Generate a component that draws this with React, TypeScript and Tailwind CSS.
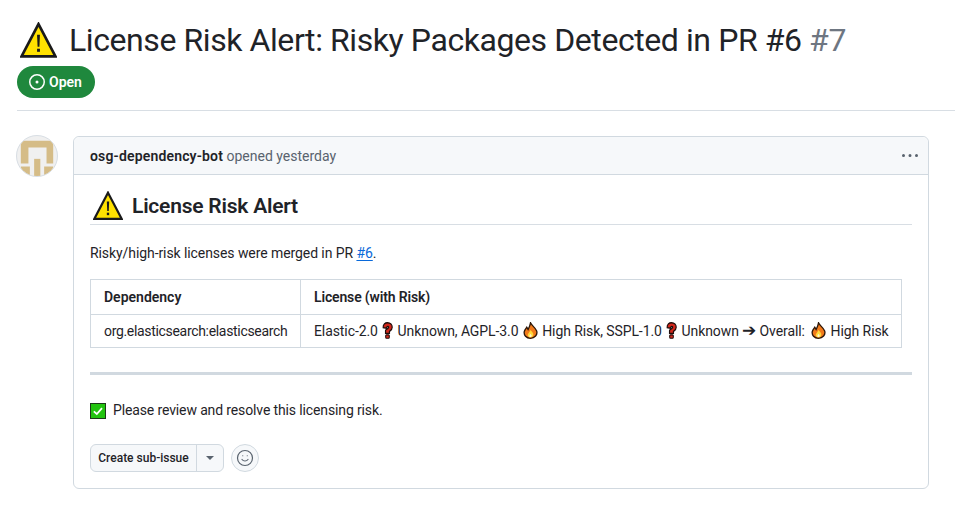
import { Smile } from 'lucide-react';

const font = { fontFamily: 'Roboto, sans-serif' };

const WarningIcon = ({ className }: { className: string }) => (
  <svg viewBox="0 0 36 36" className={className}>
    <path d="M18 2 L34.5 33.5 H1.5 Z" fill="#ffe100" stroke="#1a1a1a" strokeWidth="2.6" strokeLinejoin="miter" />
    <path d="M16.6 12.5 h2.8 l-0.5 11.5 h-1.8 Z" fill="#1a1a1a" />
    <rect x="16.6" y="26" width="2.8" height="3" fill="#1a1a1a" />
  </svg>
);

const QuestionIcon = () => (
  <svg viewBox="0 0 14 18" preserveAspectRatio="none" className="inline-block w-[11px] h-[17px] align-[-3px] mx-[1px]">
    <path
      d="M1.5 6 C1 2.5 4 0.8 7 0.8 C10.8 0.8 13 3 13 5.5 C13 8 11 9 9.5 10 L9.5 12 L4.5 12 L4.5 9 C4.5 8 8.5 7 8.5 5.5 C8.5 4.5 6 4.3 5.6 6.5 Z"
      fill="#d4281c"
      stroke="#1e0c0a"
      strokeWidth="1.5"
    />
    <rect x="4.7" y="13.6" width="4.6" height="3.6" rx="1" fill="#d4281c" stroke="#1e0c0a" strokeWidth="1.3" />
  </svg>
);

const FireIcon = () => (
  <svg viewBox="0 0 16 18" className="inline-block w-[15px] h-[17px] align-[-3px] mx-[1px]">
    <path
      d="M8 0.8 C9 3.5 13 5.5 14.6 9.5 C15.8 13.5 12.5 17.3 8 17.3 C3.5 17.3 0.5 14 1.4 10 C2 8 3.2 7 4 5.5 C4.8 6.5 5 7.5 5.4 8 C6.5 6 7.5 4 8 0.8 Z"
      fill="#f27a1a"
      stroke="#2c1608"
      strokeWidth="1.4"
    />
    <path d="M8 8.5 C9.5 10.5 11.5 12 11 14 C10.5 15.8 9 16.3 8 16.3 C6.5 16.3 5 15.3 5 14 C5 12.5 7 11 8 8.5 Z" fill="#ffd83a" />
    <path d="M8 12.5 C8.8 13.5 9.4 14 9.2 14.8 C9 15.6 8.5 15.8 8 15.8 C7.3 15.8 6.8 15.3 6.8 14.8 C6.8 14 7.6 13.5 8 12.5 Z" fill="#fff6d0" />
  </svg>
);

const CheckIcon = () => (
  <svg viewBox="0 0 16 16" className="w-4 h-4 shrink-0">
    <rect x="0.5" y="0.5" width="15" height="15" fill="#22c40f" stroke="#1c3a18" />
    <path d="M3.8 8.4 L6.8 11 L12 5.2" fill="none" stroke="#fff" strokeWidth="1.8" />
  </svg>
);

const Avatar = () => (
  <div className="w-[42px] h-[42px] shrink-0 rounded-full border border-[#d8dee4] overflow-hidden bg-[#f0f0f0]">
    <svg viewBox="0 0 42 42" className="w-full h-full">
      <path d="M4 5 H38 V29 H31 V12 H12 V29 H4 Z" fill="#d5bc87" />
      <rect x="18" y="24" width="6.5" height="18" fill="#d5bc87" />
      <path d="M4 32 H13.5 V42 H4 Z M28.5 32 H38 V42 H28.5 Z" fill="#d5bc87" />
    </svg>
  </div>
);

export default function App() {
  return (
    <div className="bg-white h-[507px] w-[955px] overflow-hidden text-[#1f2328] text-[14px] pl-[17px] pt-[18px]" style={font}>
      <div className="flex items-center gap-[12px] h-[44px]">
        <WarningIcon className="w-[37px] h-[37px] ml-[3px]" />
        <h1 className="text-[32px] font-normal leading-[44px] whitespace-nowrap tracking-[-0.42px]">
          License Risk Alert: Risky Packages Detected in PR #6 <span className="text-[#6e7681]">#7</span>
        </h1>
      </div>
      <div className="mt-[4px] inline-flex items-center gap-[4px] h-[32px] pl-[12px] pr-[13px] rounded-full bg-[#1f883d] text-white font-semibold">
        <svg viewBox="0 0 16 16" className="w-4 h-4" fill="currentColor">
          <path d="M8 9.5a1.5 1.5 0 1 0 0-3 1.5 1.5 0 0 0 0 3Z" />
          <path d="M8 0a8 8 0 1 1 0 16A8 8 0 0 1 8 0ZM1.5 8a6.5 6.5 0 1 0 13 0 6.5 6.5 0 0 0-13 0Z" />
        </svg>
        Open
      </div>
      <div className="mt-[12px] h-px bg-[#d8dee4]" />

      <div className="flex mt-[24px] items-start -ml-px">
        <Avatar />
        <div className="ml-[15px] w-[856px] h-[353px] rounded-md border border-[#d1d9e0] mt-px">
          <div className="flex items-center justify-between h-[38px] pl-[16px] pr-[10px] bg-[#f6f8fa] border-b border-[#d1d9e0] rounded-t-md">
            <div className="text-[#59636e] pt-[1px]">
              <span className="font-semibold text-[#1f2328] tracking-[0.17px]">osg-dependency-bot</span> opened yesterday
            </div>
            <svg viewBox="0 0 16 16" className="w-4 h-4 fill-[#59636e]">
              <path d="M8 9a1.5 1.5 0 1 0 0-3 1.5 1.5 0 0 0 0 3ZM1.5 9a1.5 1.5 0 1 0 0-3 1.5 1.5 0 0 0 0 3Zm13 0a1.5 1.5 0 1 0 0-3 1.5 1.5 0 0 0 0 3Z" />
            </svg>
          </div>
          <div className="px-[16px]">
            <div className="flex items-end gap-[9px] h-[50px] pb-[3px] border-b border-[#d8dee4]">
              <WarningIcon className="w-[30px] h-[30px] ml-[3px]" />
              <h2 className="text-[21px] font-semibold leading-[30px] tracking-[-0.22px]">License Risk Alert</h2>
            </div>
            <p className="mt-[18px] leading-[21px] tracking-[-0.08px]">
              Risky/high-risk licenses were merged in PR{' '}
              <a className="text-[#0969da] underline underline-offset-2">#6</a>.
            </p>
            <table className="mt-[15px] w-[812px] table-fixed border-collapse">
              <thead>
                <tr className="h-[35px]">
                  <th className="w-[210px] border border-[#d1d9e0] px-[13px] text-left font-semibold">Dependency</th>
                  <th className="border border-[#d1d9e0] px-[13px] text-left font-semibold tracking-[-0.15px]">License (with Risk)</th>
                </tr>
              </thead>
              <tbody>
                <tr className="h-[33px]">
                  <td className="border border-[#d1d9e0] px-[13px] tracking-[-0.32px]">org.elasticsearch:elasticsearch</td>
                  <td className="border border-[#d1d9e0] px-[13px] whitespace-nowrap tracking-[-0.09px]">
                    Elastic-2.0 <QuestionIcon /> Unknown, AGPL-3.0 <FireIcon /> High Risk, SSPL-1.0 <QuestionIcon /> Unknown <span className="text-[17px] leading-none">➔</span> Overall: <span className="ml-[2px]"><FireIcon /></span> High Risk
                  </td>
                </tr>
              </tbody>
            </table>
            <div className="mt-[24px] h-[3px] bg-[#d1d9e0]" />
            <div className="mt-[25px] flex items-center gap-[7px] h-[21px] tracking-[-0.13px]">
              <CheckIcon />
              <span>Please review and resolve this licensing risk.</span>
            </div>
            <div className="mt-[23px] flex items-center gap-[7px]">
              <div className="flex h-[28px] rounded-md border border-[#d1d9e0] bg-[#f6f8fa] text-[12px] font-medium">
                <span className="flex items-center w-[106px] justify-center border-r border-[#d1d9e0]">Create sub-issue</span>
                <span className="flex items-center justify-center w-[26px]">
                  <svg viewBox="0 0 8 4" className="w-[8px] h-[4px] fill-[#59636e]">
                    <path d="M0 0 H8 L4 4 Z" />
                  </svg>
                </span>
              </div>
              <div className="flex items-center justify-center w-[28px] h-[28px] rounded-full border border-[#d1d9e0] bg-[#f6f8fa]">
                <Smile className="w-[18px] h-[18px] text-[#59636e]" strokeWidth={1.6} />
              </div>
            </div>
          </div>
        </div>
      </div>
    </div>
  );
}
